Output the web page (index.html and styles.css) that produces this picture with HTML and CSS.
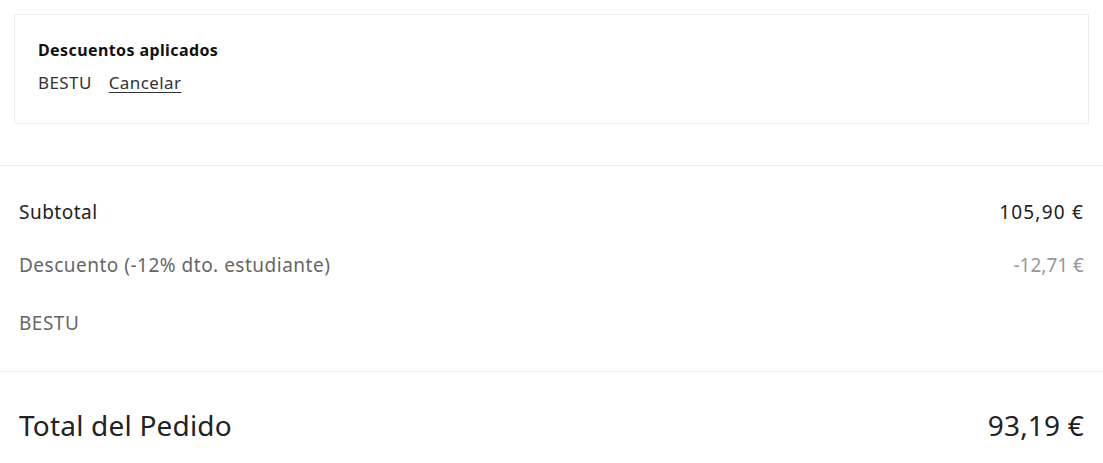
FILE: index.html
```html
<!DOCTYPE html>
<html lang="es">
<head>
<meta charset="utf-8">
<link rel="stylesheet" href="styles.css">
</head>
<body>
<div class="discounts">
  <div class="discounts-title">Descuentos aplicados</div>
  <div class="discounts-code"><span>BESTU</span><a href="#" class="cancel">Cancelar</a></div>
</div>
<div class="summary">
  <div class="row row-subtotal"><span>Subtotal</span><span class="value">105,90 €</span></div>
  <div class="row row-discount"><span>Descuento (-12% dto. estudiante)</span><span class="discount-value">-12,71 €</span></div>
  <div class="row row-code"><span>BESTU</span></div>
</div>
<div class="total">
  <span>Total del Pedido</span><span>93,19 €</span>
</div>
</body>
</html>
```
FILE: styles.css
```css
html, body {
  margin: 0;
  padding: 0;
  background: #fff;
}
body {
  font-family: "Noto Sans", "Open Sans", sans-serif;
  color: #222;
}
.discounts {
  margin: 14px 14px 0;
  border: 1px solid #ececec;
  padding: 25px 23px 29px;
}
.discounts-title {
  font-size: 16px;
  font-weight: 700;
  line-height: 20px;
  letter-spacing: 0.4px;
  color: #111;
}
.discounts-code {
  margin-top: 12px;
  font-size: 17px;
  line-height: 22px;
  letter-spacing: 0.4px;
  color: #333;
  display: flex;
  gap: 17px;
}
.cancel {
  color: #333;
  text-decoration: underline;
  text-underline-offset: 3px;
}
.summary {
  margin-top: 41px;
  border-top: 1px solid #ececec;
  padding: 34px 19px 36px;
  border-bottom: 1px solid #ececec;
}
.row {
  display: flex;
  justify-content: space-between;
  font-size: 19px;
  line-height: 24px;
  letter-spacing: 0.5px;
}
.row-subtotal {
  color: #222;
}
.value {
  letter-spacing: 1.2px;
}
.row-discount {
  margin-top: 29px;
  color: #666;
}
.discount-value {
  color: #999;
  letter-spacing: 0;
}
.row-code {
  margin-top: 34px;
  color: #666;
}
.total {
  display: flex;
  justify-content: space-between;
  padding: 37px 19px 0;
  font-size: 28px;
  line-height: 32px;
  letter-spacing: 0.2px;
  color: #222;
}
```
